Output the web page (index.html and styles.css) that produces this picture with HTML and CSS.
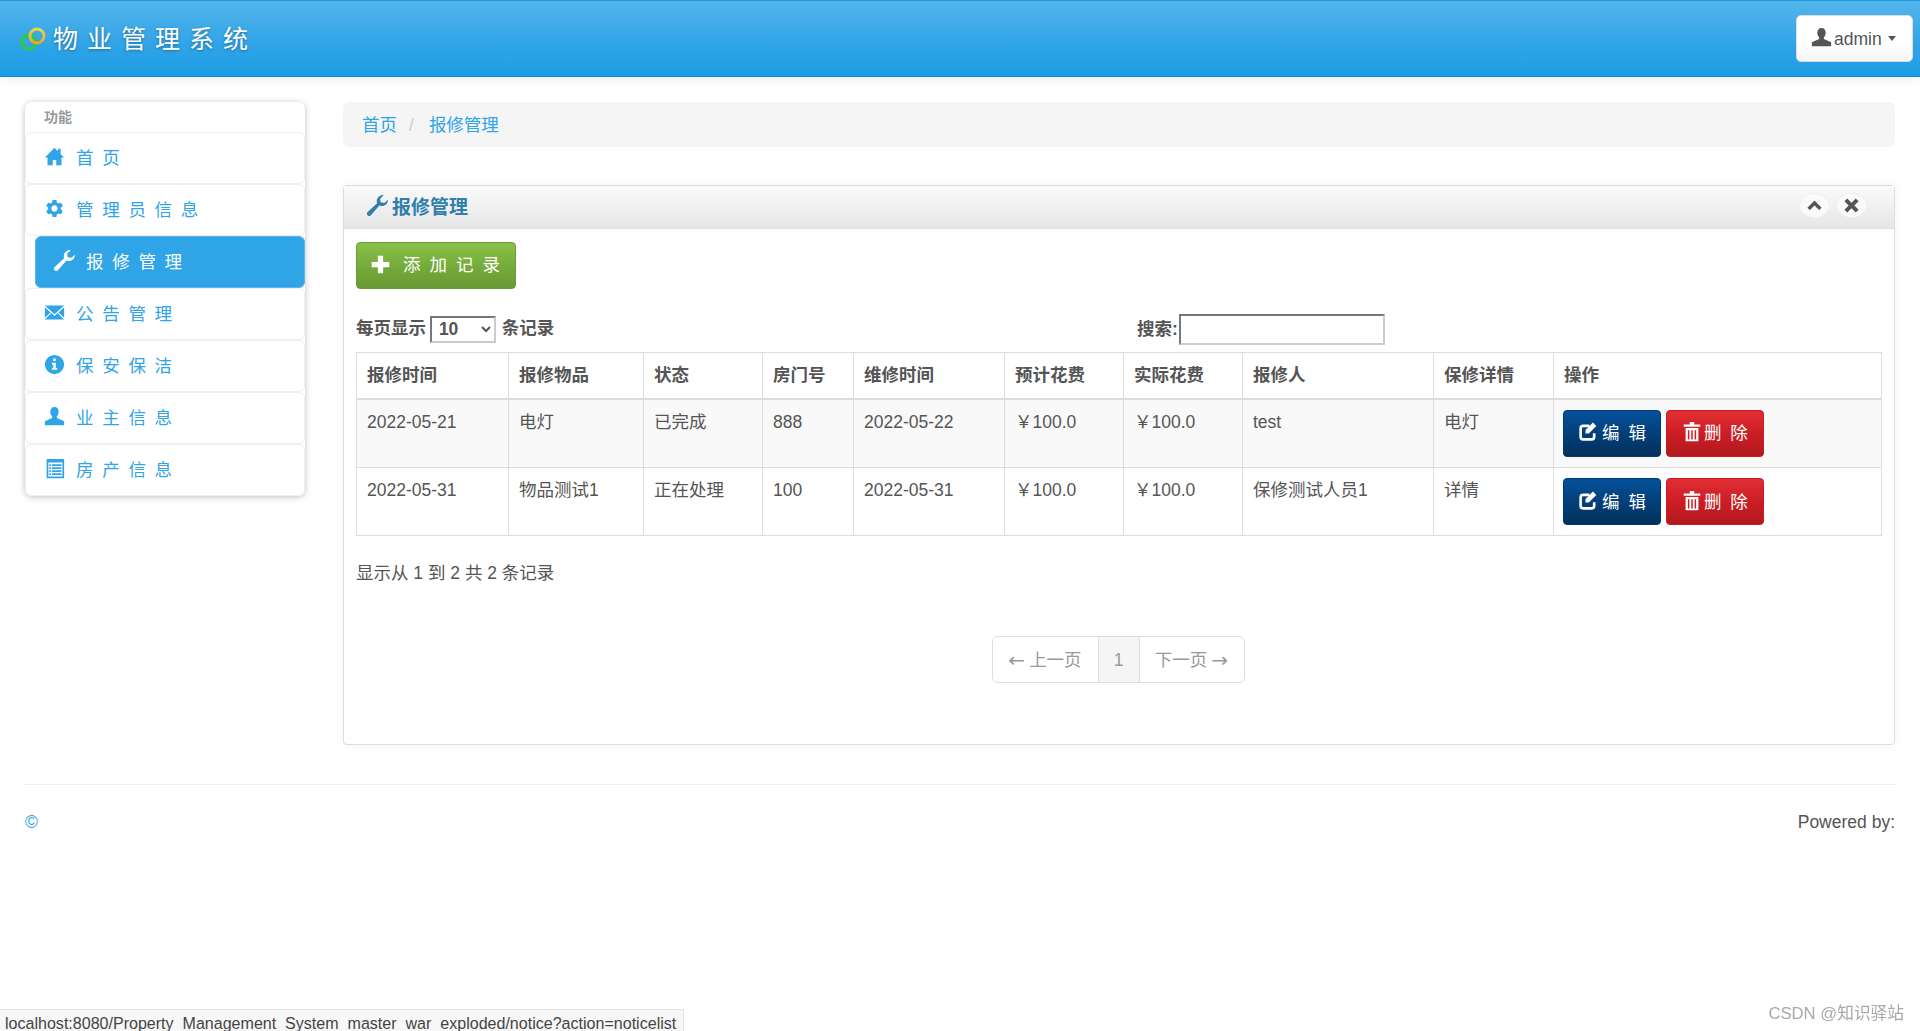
FILE: index.html
```html
<!DOCTYPE html>
<html lang="zh-CN">
  <head>
    <meta charset="UTF-8" />
    <meta name="viewport" content="width=device-width, initial-scale=1.0" />
    <title>物业管理系统</title>
    <link rel="stylesheet" href="styles.css">
  </head>
  <body>
    <svg class="sprite" xmlns="http://www.w3.org/2000/svg">
      <symbol id="i-home" viewBox="0 0 24 24"><path d="M12 2 1 13h3v9h6v-6h4v6h6v-9h3l-4-4V3h-3v3z"/></symbol>
      <symbol id="i-cog" viewBox="0 0 24 24"><path d="M19.14 12.94c.04-.3.06-.61.06-.94 0-.32-.02-.64-.07-.94l2.03-1.58a.49.49 0 00.12-.61l-1.92-3.32a.488.488 0 00-.59-.22l-2.39.96c-.5-.38-1.03-.7-1.62-.94l-.36-2.54a.484.484 0 00-.48-.41h-3.84c-.24 0-.43.17-.47.41l-.36 2.54c-.59.24-1.13.57-1.62.94l-2.39-.96c-.22-.08-.47 0-.59.22L2.74 8.87c-.12.21-.08.47.12.61l2.03 1.58c-.05.3-.09.63-.09.94s.02.64.07.94l-2.03 1.58a.49.49 0 00-.12.61l1.92 3.32c.12.22.37.29.59.22l2.39-.96c.5.38 1.03.7 1.62.94l.36 2.54c.05.24.24.41.48.41h3.84c.24 0 .44-.17.47-.41l.36-2.54c.59-.24 1.13-.56 1.62-.94l2.39.96c.22.08.47 0 .59-.22l1.92-3.32c.12-.22.07-.47-.12-.61l-2.01-1.58zM12 15.6c-1.98 0-3.6-1.62-3.6-3.6s1.62-3.6 3.6-3.6 3.6 1.62 3.6 3.6-1.62 3.6-3.6 3.6z"/></symbol>
      <symbol id="i-wrench" viewBox="2 2 20 20"><path d="M22 6.5a6 6 0 01-8.2 5.6L5.5 21.5a2.2 2.2 0 01-3.1-3.1l9.2-8.6A6 6 0 0118 2l-3.5 3.5.5 3.5 3.5.5z"/></symbol>
      <symbol id="i-envelope" viewBox="0 0 24 24"><path d="M1 4h22L12 14zM1 20h22l-7.5-7.5L12 16l-3.5-3.5zM1 6v12l6.5-6zM23 6v12l-6.5-6z"/></symbol>
      <symbol id="i-info" viewBox="0 0 24 24"><path fill-rule="evenodd" d="M12 1a11 11 0 100 22 11 11 0 000-22zM10.5 5h3v3h-3zM9 10h4.500v6H15v2H9v-2h1.500v-4H9z"/></symbol>
      <symbol id="i-user" viewBox="0 0 24 24"><path d="M12 1C9 1 7.200 3.300 7.200 6.500c0 2.300 1 4 2.100 5.200v2L1 17.500V22h22v-4.500l-8.300-3.800v-2c1.100-1.200 2.100-2.900 2.100-5.200C16.800 3.300 15 1 12 1z"/></symbol>
      <symbol id="i-list" viewBox="0 0 24 24"><path fill-rule="evenodd" d="M3 1h20v22H3zM5 5v16h16V5zM6 7h2v2H6zM9 7h11v2H9zM6 10.500h2v2H6zM9 10.500h11v2H9zM6 14h2v2H6zM9 14h11v2H9zM6 17.500h2v2H6zM9 17.500h11v2H9z"/></symbol>
      <symbol id="i-plus" viewBox="0 0 24 24"><path d="M9 2h6v7h7v6h-7v7H9v-7H2V9h7z"/></symbol>
      <symbol id="i-edit" viewBox="0 0 24 24"><path d="M18.500 14v4a3 3 0 01-3 3H6a3 3 0 01-3-3V8.500a3 3 0 013-3h7" fill="none" stroke="currentColor" stroke-width="3"/><path d="M9 16v-4l9-9 4 4-9 9z" transform="translate(0 -1) scale(.95)"/></symbol>
      <symbol id="i-trash" viewBox="0 0 24 24" preserveAspectRatio="none"><path fill-rule="evenodd" d="M1 4h8V1h6v3h8v2.500H1zM3.500 8h17v15h-17zM6.500 10.500V21h2V10.500zM11 10.500V21h2V10.500zM15.500 10.500V21h2V10.500z"/></symbol>
      <symbol id="i-up" viewBox="0 0 24 24"><path d="M12 5l10 10-3.500 3.500L12 12l-6.500 6.500L2 15z"/></symbol>
      <symbol id="i-close" viewBox="0 0 24 24"><path d="M6 2l6 6 6-6 4 4-6 6 6 6-4 4-6-6-6 6-4-4 6-6-6-6z"/></symbol>
    </svg>

    <header class="navbar">
      <a class="brand">
        <svg class="logo" viewBox="0 0 26 24">
          <defs>
            <linearGradient id="ring" x1="0" y1="0" x2="0" y2="1">
              <stop offset="0" stop-color="#e6d84a"/>
              <stop offset="1" stop-color="#f2a320"/>
            </linearGradient>
          </defs>
          <circle cx="9" cy="15" r="7" fill="none" stroke="#2ecc3a" stroke-width="3"/>
          <circle cx="17" cy="9" r="7" fill="none" stroke="url(#ring)" stroke-width="3"/>
        </svg>
        <span class="brand-name">物业管理系统</span>
      </a>
      <button class="user-btn">
        <svg class="icon user-icon"><use href="#i-user"/></svg>
        <span>admin</span>
        <span class="caret"></span>
      </button>
    </header>

    <div class="page">
      <aside class="sidebar">
        <div class="nav-header">功能</div>
        <a class="nav-item"><svg class="icon"><use href="#i-home"/></svg><span>首页</span></a>
        <a class="nav-item"><svg class="icon"><use href="#i-cog"/></svg><span>管理员信息</span></a>
        <a class="nav-item active"><svg class="icon"><use href="#i-wrench"/></svg><span>报修管理</span></a>
        <a class="nav-item"><svg class="icon"><use href="#i-envelope"/></svg><span>公告管理</span></a>
        <a class="nav-item"><svg class="icon"><use href="#i-info"/></svg><span>保安保洁</span></a>
        <a class="nav-item"><svg class="icon"><use href="#i-user"/></svg><span>业主信息</span></a>
        <a class="nav-item"><svg class="icon"><use href="#i-list"/></svg><span>房产信息</span></a>
      </aside>

      <main class="content">
        <ul class="breadcrumb">
          <li><a>首页</a></li>
          <li class="sep">/</li>
          <li><a>报修管理</a></li>
        </ul>

        <section class="box">
          <div class="box-header">
            <h2><svg class="icon"><use href="#i-wrench"/></svg>报修管理</h2>
            <div class="box-tools">
              <a class="round-btn"><svg class="icon"><use href="#i-up"/></svg></a>
              <a class="round-btn"><svg class="icon"><use href="#i-close"/></svg></a>
            </div>
          </div>
          <div class="box-body">
            <button class="btn btn-add"><svg class="icon"><use href="#i-plus"/></svg><span>添加记录</span></button>

            <div class="table-tools">
              <label class="length">每页显示
                <select><option>10</option><option>25</option><option>50</option></select>
                条记录</label>
              <label class="search">搜索:<input type="text"></label>
            </div>

            <table class="data-table">
              <colgroup>
                <col class="c1"><col class="c2"><col class="c3"><col class="c4"><col class="c5">
                <col class="c6"><col class="c7"><col class="c8"><col class="c9"><col class="c10">
              </colgroup>
              <thead>
                <tr>
                  <th>报修时间</th><th>报修物品</th><th>状态</th><th>房门号</th><th>维修时间</th>
                  <th>预计花费</th><th>实际花费</th><th>报修人</th><th>保修详情</th><th>操作</th>
                </tr>
              </thead>
              <tbody>
                <tr class="odd">
                  <td>2022-05-21</td><td>电灯</td><td>已完成</td><td>888</td><td>2022-05-22</td>
                  <td>￥100.0</td><td>￥100.0</td><td>test</td><td>电灯</td>
                  <td class="actions">
                    <a class="btn btn-edit"><svg class="icon"><use href="#i-edit"/></svg><span>编辑</span></a>
                    <a class="btn btn-del"><svg class="icon"><use href="#i-trash"/></svg><span>删除</span></a>
                  </td>
                </tr>
                <tr>
                  <td>2022-05-31</td><td>物品测试1</td><td>正在处理</td><td>100</td><td>2022-05-31</td>
                  <td>￥100.0</td><td>￥100.0</td><td>保修测试人员1</td><td>详情</td>
                  <td class="actions">
                    <a class="btn btn-edit"><svg class="icon"><use href="#i-edit"/></svg><span>编辑</span></a>
                    <a class="btn btn-del"><svg class="icon"><use href="#i-trash"/></svg><span>删除</span></a>
                  </td>
                </tr>
              </tbody>
            </table>

            <div class="info">显示从 1 到 2 共 2 条记录</div>

            <ul class="pagination">
              <li><span class="arrow">←</span> 上一页</li>
              <li class="current">1</li>
              <li>下一页 <span class="arrow">→</span></li>
            </ul>
          </div>
        </section>
      </main>
    </div>

    <footer class="footer">
      <a class="copy">©</a>
      <span>Powered by:</span>
    </footer>

    <div class="status-link">localhost:8080/Property_Management_System_master_war_exploded/notice?action=noticelist</div>
    <div class="watermark">CSDN @知识驿站</div>
  </body>
</html>
```

FILE: styles.css
```css
* {
  box-sizing: border-box;
}
body {
  margin: 0;
  height: 1031px;
  overflow: hidden;
  background-color: #fff;
  color: #555;
  font-family: "Liberation Sans", "Noto Sans CJK SC", sans-serif;
  font-size: 17.5px;
  line-height: 24px;
}
a {
  color: #2fa4e7;
  text-decoration: none;
}
ul {
  list-style: none;
  margin: 0;
  padding: 0;
}
.sprite {
  display: none;
}
.icon {
  display: block;
  width: 21px;
  height: 21px;
  fill: currentColor;
  flex: none;
}

/* top bar */
.navbar {
  display: flex;
  align-items: center;
  justify-content: space-between;
  height: 77px;
  padding: 0 7px 0 20px;
  background: linear-gradient(#54b4eb, #2fa4e7 60%, #1d9ce5);
  border-top: 1px solid #1b97e0;
  border-bottom: 1px solid #178acc;
  box-shadow: 0 2px 10px rgba(0, 0, 0, 0.08);
}
.brand {
  display: flex;
  align-items: center;
  color: #fff;
}
.logo {
  width: 26px;
  height: 24px;
  margin-top: 1px;
}
.brand-name {
  margin-left: 7px;
  font-size: 25px;
  letter-spacing: 9px;
  line-height: 34px;
  text-shadow: 0 1px 3px rgba(0, 0, 0, 0.35);
}
.user-btn {
  display: flex;
  align-items: center;
  width: 117px;
  height: 47px;
  padding: 0 0 0 14px;
  color: #555;
  font: inherit;
  background: linear-gradient(#fff, #fff 60%, #f5f5f5);
  border: 1px solid #ddd;
  border-radius: 5px;
}
.user-icon {
  margin: -3px 2px 0 0;
}
.caret {
  width: 0;
  height: 0;
  margin-left: 6px;
  border-top: 5px solid #555;
  border-left: 4.500px solid transparent;
  border-right: 4.500px solid transparent;
}

/* main layout */
.page {
  display: flex;
  gap: 38px;
  padding: 25px 25px 0;
}
.sidebar {
  flex: none;
  align-self: flex-start;
  width: 280px;
  background-color: #fff;
  border-radius: 7px;
  box-shadow: 0 1px 6px rgba(0, 0, 0, 0.25);
}
.nav-header {
  height: 30px;
  padding-left: 19px;
  color: #999;
  font-size: 14px;
  font-weight: bold;
  line-height: 30px;
}
.nav-item {
  display: flex;
  align-items: center;
  height: 52px;
  padding-left: 18px;
  border: 1px solid #eee;
  border-radius: 6px;
}
.nav-item .icon {
  margin-top: -4px;
}
.nav-item span {
  margin-left: 11px;
  letter-spacing: 8.700px;
}
.nav-item.active {
  margin-left: 10px;
  color: #fff;
  background-color: #2fa4e7;
  border-color: #5cb5ec;
}
.content {
  flex: 1;
  min-width: 0;
}
.breadcrumb {
  display: flex;
  align-items: center;
  height: 45px;
  padding: 0 19px;
  background-color: #f5f5f5;
  border-radius: 6px;
}
.sep {
  margin: 0 15px 0 12px;
  color: #ccc;
}

/* panel */
.box {
  height: 560px;
  margin-top: 38px;
  background-color: #fff;
  border: 1px solid #ddd;
  border-radius: 4px;
  box-shadow: 0 0 10px rgba(0, 0, 0, 0.06);
}
.box-header {
  display: flex;
  align-items: center;
  justify-content: space-between;
  height: 43px;
  padding: 0 27px 0 23px;
  background: linear-gradient(#fafafa, #e6e6e6);
  border-bottom: 1px solid #ddd;
}
.box-header h2 {
  display: flex;
  align-items: center;
  margin: 2px 0 0;
  color: #317eac;
  font-size: 19px;
  font-weight: bold;
}
.box-header h2 .icon {
  margin: -5px 4px 0 0;
}
.box-tools {
  display: flex;
  gap: 6px;
  margin-top: -4px;
}
.round-btn {
  display: flex;
  align-items: center;
  justify-content: center;
  width: 31px;
  height: 25px;
  color: #555;
  background-color: #fafafa;
  border: 1px solid #eee;
  border-radius: 50%;
}
.round-btn .icon {
  width: 17px;
  height: 17px;
}
.box-body {
  padding: 13px 12px 0;
}
.btn {
  display: inline-flex;
  align-items: center;
  height: 47px;
  color: #fff;
  font: inherit;
  border-radius: 4px;
  vertical-align: top;
  cursor: pointer;
}
.btn .icon {
  margin-top: -3px;
}
.btn span {
  letter-spacing: 9px;
}
.btn-add {
  width: 160px;
  padding: 0 0 0 13px;
  background: linear-gradient(#88c149, #73a839 60%, #699934);
  border: 1px solid #6a9c35;
}
.btn-add span {
  margin: -2px 0 0 12px;
}
.btn-edit {
  width: 98px;
  padding-left: 14px;
  background: linear-gradient(#04519b, #033c73 60%, #02305c);
  border: 1px solid #033c73;
}
.btn-edit span {
  margin-left: 3px;
}
.btn-del {
  width: 98px;
  padding-left: 16px;
  background: linear-gradient(#e12e34, #c71c22 60%, #b01a1f);
  border: 1px solid #c71c22;
}
.btn-del .icon {
  width: 18px;
}
.btn-del span {
  margin-left: 3px;
}

/* table tools */
.table-tools {
  display: flex;
  align-items: center;
  height: 30px;
  margin-top: 25px;
  font-weight: bold;
}
.length {
  width: 781px;
}
.length select {
  width: 66px;
  height: 27px;
  margin: 0 1px 0 -1px;
  padding-left: 3px;
  color: #555;
  font-family: inherit;
  font-size: 17.5px;
  font-weight: bold;
  background-color: #fff;
  border: 2px inset #ccc;
  vertical-align: middle;
}
.search {
  display: flex;
  align-items: center;
}
.search input {
  width: 206px;
  height: 31px;
  margin-left: 1px;
  border: 2px inset #ccc;
}

/* table */
.data-table {
  width: 1526px;
  margin-top: 8px;
  border-collapse: collapse;
  table-layout: fixed;
}
.c1 { width: 152px; }
.c2 { width: 135px; }
.c3 { width: 119px; }
.c4 { width: 91px; }
.c5 { width: 151px; }
.c6 { width: 119px; }
.c7 { width: 119px; }
.c8 { width: 191px; }
.c9 { width: 120px; }
.c10 { width: 328px; }
.data-table th,
.data-table td {
  padding: 0 10px;
  border: 1px solid #ddd;
  text-align: left;
  vertical-align: top;
}
.data-table th {
  height: 46px;
  line-height: 44px;
  border-bottom-width: 2px;
}
.data-table td {
  height: 68px;
  padding-top: 10px;
}
.data-table td.actions {
  padding-left: 9px;
}
.data-table .odd td {
  height: 69px;
  background-color: #f9f9f9;
}
.info {
  margin-top: 25px;
}

/* pager */
.pagination {
  display: flex;
  justify-content: center;
  margin: 51px 0 0 -2px;
  color: #999;
}
.pagination li {
  display: flex;
  align-items: center;
  justify-content: center;
  gap: 4px;
  width: 107px;
  height: 47px;
  background-color: #fff;
  border: 1px solid #ddd;
}
.pagination li:first-child {
  border-radius: 6px 0 0 6px;
}
.pagination li:last-child {
  width: 106px;
  border-radius: 0 6px 6px 0;
}
.pagination .current {
  width: 42px;
  margin: 0 -1px;
  background-color: #f5f5f5;
}
.arrow {
  font-family: "DejaVu Sans", sans-serif;
  font-size: 20px;
  line-height: 1;
}

/* footer */
.footer {
  display: flex;
  justify-content: space-between;
  margin: 39px 25px 0;
  padding-top: 25px;
  border-top: 1px solid #eee;
}

/* overlays */
.status-link {
  position: fixed;
  left: 0;
  bottom: 0;
  width: 684px;
  height: 22px;
  padding-left: 5px;
  overflow: hidden;
  color: #444;
  font-size: 16.060px;
  line-height: 27px;
  white-space: nowrap;
  background-color: #f7f7f7;
  border-top: 1px solid #e4e4e4;
  border-right: 1px solid #e4e4e4;
}
.watermark {
  position: fixed;
  right: 16px;
  bottom: 5px;
  color: #a8a8a8;
  font-size: 16.700px;
}
```
